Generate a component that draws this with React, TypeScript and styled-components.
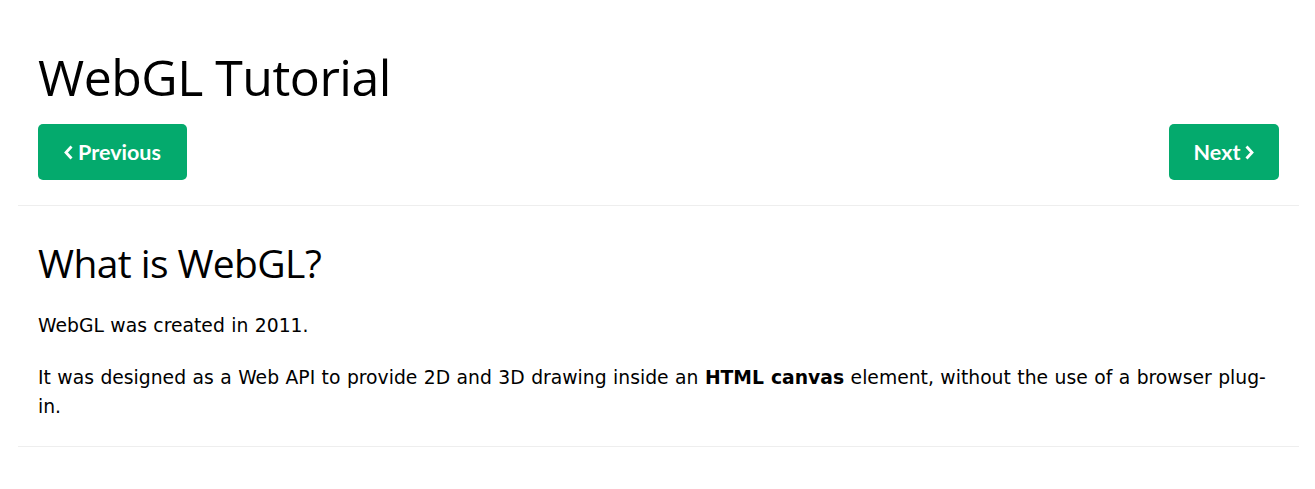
import React, { FC } from 'react';
import styled, { createGlobalStyle } from 'styled-components';

const GlobalStyle = createGlobalStyle`
  body {
    margin: 0;
    background: #fff;
    color: #000;
    font-family: "DejaVu Sans", Verdana, sans-serif;
  }
`;

const Main = styled.div`
  padding: 0 16px 0 18px;
`;

const Section = styled.div`
  padding: 0 20px;
`;

const Title = styled.h1`
  font-family: "Open Sans", "Segoe UI", sans-serif;
  font-weight: 400;
  font-size: 50px;
  line-height: 60px;
  margin: 47px 0 17px;
  letter-spacing: -0.5px;
`;

const NavBar = styled.div`
  display: flex;
  justify-content: space-between;
  padding-bottom: 25px;
`;

const NavButton = styled.a<{ $w: number }>`
  display: inline-flex;
  align-items: center;
  justify-content: center;
  gap: 5px;
  height: 56px;
  width: ${(p) => p.$w}px;
  box-sizing: border-box;
  background: #04aa6d;
  color: #fff;
  border-radius: 5px;
  font-family: "Lato", "Source Sans Pro", sans-serif;
  font-weight: 700;
  font-size: 21.5px;
  text-decoration: none;
`;

const ChevronIcon = styled.svg`
  width: 9px;
  height: 15px;
  flex: none;
`;

const Chevron: FC<{ dir: 'left' | 'right' }> = ({ dir }) => (
  <ChevronIcon viewBox="0 0 9 15">
    <polyline
      points={dir === 'left' ? '7.5,1.5 2,7.5 7.5,13.5' : '1.5,1.5 7,7.5 1.5,13.5'}
      fill="none"
      stroke="#fff"
      strokeWidth="2.8"
    />
  </ChevronIcon>
);

const Rule = styled.hr`
  border: 0;
  border-top: 1px solid #eee;
  margin: 0;
`;

const Heading = styled.h2`
  font-family: "Open Sans", "Segoe UI", sans-serif;
  font-weight: 400;
  font-size: 39px;
  line-height: 48px;
  margin: 33px 0 24px;
  letter-spacing: -0.6px;
`;

const Para = styled.p`
  font-size: 18.75px;
  line-height: 29px;
  word-spacing: 0.5px;
  margin: 0 0 23px;

  &:last-child {
    margin-bottom: 25px;
  }
`;

const App: FC = () => {
  return (
    <Main>
      <GlobalStyle />
      <Section>
        <Title>WebGL Tutorial</Title>
        <NavBar>
          <NavButton href="#" $w={149}>
            <Chevron dir="left" />Previous
          </NavButton>
          <NavButton href="#" $w={110}>
            Next<Chevron dir="right" />
          </NavButton>
        </NavBar>
      </Section>
      <Rule />
      <Section>
        <Heading>What is WebGL?</Heading>
        <Para>WebGL was created in 2011.</Para>
        <Para>
          It was designed as a Web API to provide 2D and 3D drawing inside an <b>HTML canvas</b> element,
          without the use of a browser plug-in.
        </Para>
      </Section>
      <Rule />
    </Main>
  );
};

export default App;
